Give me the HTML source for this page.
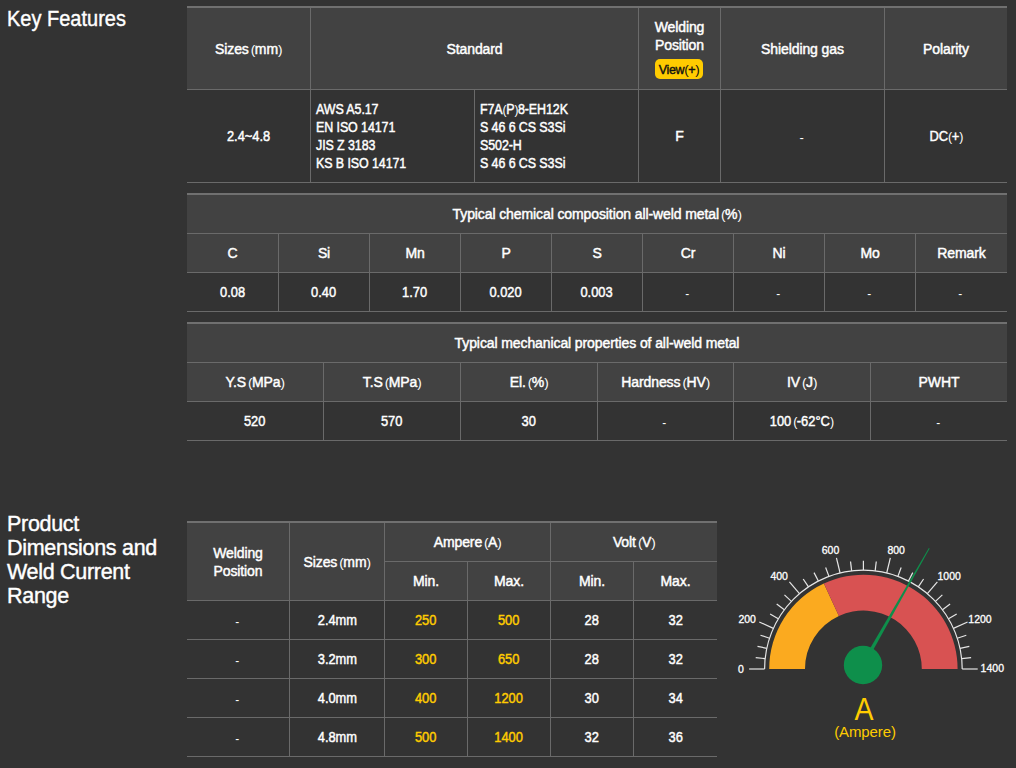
<!DOCTYPE html>
<html><head><meta charset="utf-8"><style>
html,body{margin:0;padding:0;background:#333333;width:1016px;height:768px;overflow:hidden;}
body{position:relative;font-family:"Liberation Sans",sans-serif;color:#fff;}
.r{position:absolute}
.t,.th,.td{position:absolute;display:flex;align-items:center;text-align:center;font-size:14px;line-height:18px;color:#fff;-webkit-text-stroke-width:0.45px;white-space:nowrap;letter-spacing:-0.1px}
.n{letter-spacing:0px}
.n>div{transform:scaleX(0.92)}
.code{letter-spacing:-0.1px}
.code>div{transform:scaleX(0.89);transform-origin:0 50%}
.lt{letter-spacing:-0.1px}
.ps{word-spacing:-1.2px}
.dash{-webkit-text-stroke-width:0;font-size:13px;line-height:0;position:relative;top:1px;left:-1px}
.p{-webkit-text-stroke-width:0;letter-spacing:-0.5px;font-size:13.5px;line-height:0}
.title{position:absolute;font-size:21.5px;line-height:24px;color:#fff;white-space:nowrap;letter-spacing:-0.45px;-webkit-text-stroke:0.4px #fff}
.btn{position:absolute;left:16px;top:51px;width:48px;height:20px;border-radius:5px;background:#ffcc00;color:#111;font-size:12.5px;line-height:22px;font-weight:400;text-align:center;letter-spacing:-0.3px;-webkit-text-stroke-width:0.4px}
.g{position:absolute;left:0;top:0}
.gl{font-family:"Liberation Sans",sans-serif;font-size:10.5px;fill:#fff;stroke:#fff;stroke-width:0.3px}
.bigA{position:absolute;text-align:center;font-size:31px;line-height:34px;color:#ffcc00;transform:scaleX(0.92)}
.amp{position:absolute;text-align:center;font-size:15px;line-height:18px;color:#ffcc00;letter-spacing:-0.1px}
</style></head><body>
<div class="title" style="left:7px;top:7px;letter-spacing:0px;transform:scaleX(0.93);transform-origin:0 0">Key Features</div><div class="title" style="left:7px;top:512px;width:175px;letter-spacing:-0.3px">Product<br>Dimensions and<br>Weld Current<br>Range</div><div class="r" style="left:187px;top:6px;width:820px;height:2px;background:#707070"></div><div class="r" style="left:187px;top:8px;width:820px;height:81px;background:#424242"></div><div class="r" style="left:187px;top:89px;width:820px;height:1px;background:#6a6a6a"></div><div class="r" style="left:187px;top:182px;width:820px;height:1px;background:#6a6a6a"></div><div class="r" style="left:310px;top:8px;width:1px;height:174px;background:#6a6a6a"></div><div class="r" style="left:638px;top:8px;width:1px;height:174px;background:#6a6a6a"></div><div class="r" style="left:720px;top:8px;width:1px;height:174px;background:#6a6a6a"></div><div class="r" style="left:884px;top:8px;width:1px;height:174px;background:#6a6a6a"></div><div class="r" style="left:474px;top:90px;width:1px;height:92px;background:#6a6a6a"></div><div class="th" style="left:187px;top:8px;width:123px;height:81px;justify-content:center;"><div>Sizes<span class="p ps"> (</span>mm<span class="p">)</span></div></div><div class="th" style="left:311px;top:8px;width:327px;height:81px;justify-content:center;"><div>Standard</div></div><div class="th" style="left:639px;top:8px;width:81px;height:81px;flex-direction:column;justify-content:flex-start"><div style="position:absolute;left:0;width:81px;top:10px;text-align:center">Welding<br>Position</div><div class="btn">View<span class="p">(</span>+<span class="p">)</span></div></div><div class="th" style="left:721px;top:8px;width:163px;height:81px;justify-content:center;"><div>Shielding gas</div></div><div class="th" style="left:885px;top:8px;width:122px;height:81px;justify-content:center;"><div>Polarity</div></div><div class="td n" style="left:187px;top:90px;width:123px;height:92px;justify-content:center;"><div>2.4~4.8</div></div><div class="td code" style="left:316px;top:90px;width:158px;height:92px;justify-content:flex-start;text-align:left"><div>AWS A5.17<br>EN ISO 14171<br>JIS Z 3183<br>KS B ISO 14171</div></div><div class="td code" style="left:480px;top:90px;width:158px;height:92px;justify-content:flex-start;text-align:left"><div>F7A<span class="p">(</span>P<span class="p">)</span>8-EH12K<br>S 46 6 CS S3Si<br>S502-H<br>S 46 6 CS S3Si</div></div><div class="td" style="left:639px;top:90px;width:81px;height:92px;justify-content:center;"><div>F</div></div><div class="td" style="left:721px;top:90px;width:163px;height:92px;justify-content:center;"><div><span class="dash">-</span></div></div><div class="td n" style="left:885px;top:90px;width:122px;height:92px;justify-content:center;"><div>DC<span class="p">(</span>+<span class="p">)</span></div></div><div class="r" style="left:187px;top:193px;width:820px;height:2px;background:#707070"></div><div class="r" style="left:187px;top:195px;width:820px;height:77px;background:#424242"></div><div class="r" style="left:187px;top:233px;width:820px;height:1px;background:#6a6a6a"></div><div class="r" style="left:187px;top:272px;width:820px;height:1px;background:#6a6a6a"></div><div class="r" style="left:187px;top:311px;width:820px;height:1px;background:#6a6a6a"></div><div class="th lt" style="left:187px;top:195px;width:820px;height:38px;justify-content:center;"><div>Typical chemical composition all-weld metal<span class="p ps"> (</span>%<span class="p">)</span></div></div><div class="r" style="left:278px;top:234px;width:1px;height:77px;background:#6a6a6a"></div><div class="r" style="left:369px;top:234px;width:1px;height:77px;background:#6a6a6a"></div><div class="r" style="left:460px;top:234px;width:1px;height:77px;background:#6a6a6a"></div><div class="r" style="left:551px;top:234px;width:1px;height:77px;background:#6a6a6a"></div><div class="r" style="left:642px;top:234px;width:1px;height:77px;background:#6a6a6a"></div><div class="r" style="left:733px;top:234px;width:1px;height:77px;background:#6a6a6a"></div><div class="r" style="left:824px;top:234px;width:1px;height:77px;background:#6a6a6a"></div><div class="r" style="left:915px;top:234px;width:1px;height:77px;background:#6a6a6a"></div><div class="th" style="left:187px;top:234px;width:91px;height:38px;justify-content:center;"><div>C</div></div><div class="td n" style="left:187px;top:273px;width:91px;height:38px;justify-content:center;"><div>0.08</div></div><div class="th" style="left:279px;top:234px;width:90px;height:38px;justify-content:center;"><div>Si</div></div><div class="td n" style="left:279px;top:273px;width:90px;height:38px;justify-content:center;"><div>0.40</div></div><div class="th" style="left:370px;top:234px;width:90px;height:38px;justify-content:center;"><div>Mn</div></div><div class="td n" style="left:370px;top:273px;width:90px;height:38px;justify-content:center;"><div>1.70</div></div><div class="th" style="left:461px;top:234px;width:90px;height:38px;justify-content:center;"><div>P</div></div><div class="td n" style="left:461px;top:273px;width:90px;height:38px;justify-content:center;"><div>0.020</div></div><div class="th" style="left:552px;top:234px;width:90px;height:38px;justify-content:center;"><div>S</div></div><div class="td n" style="left:552px;top:273px;width:90px;height:38px;justify-content:center;"><div>0.003</div></div><div class="th" style="left:643px;top:234px;width:90px;height:38px;justify-content:center;"><div>Cr</div></div><div class="td n" style="left:643px;top:273px;width:90px;height:38px;justify-content:center;"><div><span class="dash">-</span></div></div><div class="th" style="left:734px;top:234px;width:90px;height:38px;justify-content:center;"><div>Ni</div></div><div class="td n" style="left:734px;top:273px;width:90px;height:38px;justify-content:center;"><div><span class="dash">-</span></div></div><div class="th" style="left:825px;top:234px;width:90px;height:38px;justify-content:center;"><div>Mo</div></div><div class="td n" style="left:825px;top:273px;width:90px;height:38px;justify-content:center;"><div><span class="dash">-</span></div></div><div class="th" style="left:916px;top:234px;width:91px;height:38px;justify-content:center;"><div>Remark</div></div><div class="td n" style="left:916px;top:273px;width:91px;height:38px;justify-content:center;"><div><span class="dash">-</span></div></div><div class="r" style="left:187px;top:322px;width:820px;height:2px;background:#707070"></div><div class="r" style="left:187px;top:324px;width:820px;height:77px;background:#424242"></div><div class="r" style="left:187px;top:362px;width:820px;height:1px;background:#6a6a6a"></div><div class="r" style="left:187px;top:401px;width:820px;height:1px;background:#6a6a6a"></div><div class="r" style="left:187px;top:440px;width:820px;height:1px;background:#6a6a6a"></div><div class="th lt" style="left:187px;top:324px;width:820px;height:38px;justify-content:center;"><div>Typical mechanical properties of all-weld metal</div></div><div class="r" style="left:323px;top:363px;width:1px;height:77px;background:#6a6a6a"></div><div class="r" style="left:460px;top:363px;width:1px;height:77px;background:#6a6a6a"></div><div class="r" style="left:597px;top:363px;width:1px;height:77px;background:#6a6a6a"></div><div class="r" style="left:733px;top:363px;width:1px;height:77px;background:#6a6a6a"></div><div class="r" style="left:870px;top:363px;width:1px;height:77px;background:#6a6a6a"></div><div class="th" style="left:187px;top:363px;width:136px;height:38px;justify-content:center;"><div>Y.S<span class="p ps"> (</span>MPa<span class="p">)</span></div></div><div class="td n" style="left:187px;top:402px;width:136px;height:38px;justify-content:center;"><div>520</div></div><div class="th" style="left:324px;top:363px;width:136px;height:38px;justify-content:center;"><div>T.S<span class="p ps"> (</span>MPa<span class="p">)</span></div></div><div class="td n" style="left:324px;top:402px;width:136px;height:38px;justify-content:center;"><div>570</div></div><div class="th" style="left:461px;top:363px;width:136px;height:38px;justify-content:center;"><div>El.<span class="p ps"> (</span>%<span class="p">)</span></div></div><div class="td n" style="left:461px;top:402px;width:136px;height:38px;justify-content:center;"><div>30</div></div><div class="th" style="left:598px;top:363px;width:135px;height:38px;justify-content:center;"><div>Hardness<span class="p ps"> (</span>HV<span class="p">)</span></div></div><div class="td n" style="left:598px;top:402px;width:135px;height:38px;justify-content:center;"><div><span class="dash">-</span></div></div><div class="th" style="left:734px;top:363px;width:136px;height:38px;justify-content:center;"><div>IV<span class="p ps"> (</span>J<span class="p">)</span></div></div><div class="td n" style="left:734px;top:402px;width:136px;height:38px;justify-content:center;"><div>100<span class="p ps"> (</span>-62&deg;C<span class="p">)</span></div></div><div class="th" style="left:871px;top:363px;width:136px;height:38px;justify-content:center;"><div>PWHT</div></div><div class="td n" style="left:871px;top:402px;width:136px;height:38px;justify-content:center;"><div><span class="dash">-</span></div></div><div class="r" style="left:187px;top:521px;width:530px;height:2px;background:#707070"></div><div class="r" style="left:187px;top:523px;width:530px;height:77px;background:#424242"></div><div class="r" style="left:187px;top:600px;width:530px;height:1px;background:#6a6a6a"></div><div class="r" style="left:187px;top:639px;width:530px;height:1px;background:#6a6a6a"></div><div class="r" style="left:187px;top:678px;width:530px;height:1px;background:#6a6a6a"></div><div class="r" style="left:187px;top:717px;width:530px;height:1px;background:#6a6a6a"></div><div class="r" style="left:187px;top:756px;width:530px;height:1px;background:#6a6a6a"></div><div class="r" style="left:289px;top:523px;width:1px;height:233px;background:#6a6a6a"></div><div class="r" style="left:384px;top:523px;width:1px;height:233px;background:#6a6a6a"></div><div class="r" style="left:550px;top:523px;width:1px;height:233px;background:#6a6a6a"></div><div class="r" style="left:467px;top:562px;width:1px;height:194px;background:#6a6a6a"></div><div class="r" style="left:633px;top:562px;width:1px;height:194px;background:#6a6a6a"></div><div class="r" style="left:385px;top:561px;width:332px;height:1px;background:#6a6a6a"></div><div class="th" style="left:187px;top:523px;width:102px;height:77px;justify-content:center;"><div>Welding<br>Position</div></div><div class="th" style="left:290px;top:523px;width:94px;height:77px;justify-content:center;"><div>Sizes<span class="p ps"> (</span>mm<span class="p">)</span></div></div><div class="th" style="left:385px;top:523px;width:165px;height:38px;justify-content:center;"><div>Ampere<span class="p ps"> (</span>A<span class="p">)</span></div></div><div class="th" style="left:551px;top:523px;width:166px;height:38px;justify-content:center;"><div>Volt<span class="p ps"> (</span>V<span class="p">)</span></div></div><div class="th" style="left:385px;top:562px;width:82px;height:38px;justify-content:center;"><div>Min.</div></div><div class="th" style="left:468px;top:562px;width:82px;height:38px;justify-content:center;"><div>Max.</div></div><div class="th" style="left:551px;top:562px;width:82px;height:38px;justify-content:center;"><div>Min.</div></div><div class="th" style="left:634px;top:562px;width:83px;height:38px;justify-content:center;"><div>Max.</div></div><div class="td n" style="left:187px;top:601px;width:102px;height:38px;justify-content:center;"><div><span class="dash">-</span></div></div><div class="td n" style="left:290px;top:601px;width:94px;height:38px;justify-content:center;"><div>2.4mm</div></div><div class="td n" style="left:385px;top:601px;width:82px;height:38px;justify-content:center;color:#ffcc00"><div>250</div></div><div class="td n" style="left:468px;top:601px;width:82px;height:38px;justify-content:center;color:#ffcc00"><div>500</div></div><div class="td n" style="left:551px;top:601px;width:82px;height:38px;justify-content:center;"><div>28</div></div><div class="td n" style="left:634px;top:601px;width:83px;height:38px;justify-content:center;"><div>32</div></div><div class="td n" style="left:187px;top:640px;width:102px;height:38px;justify-content:center;"><div><span class="dash">-</span></div></div><div class="td n" style="left:290px;top:640px;width:94px;height:38px;justify-content:center;"><div>3.2mm</div></div><div class="td n" style="left:385px;top:640px;width:82px;height:38px;justify-content:center;color:#ffcc00"><div>300</div></div><div class="td n" style="left:468px;top:640px;width:82px;height:38px;justify-content:center;color:#ffcc00"><div>650</div></div><div class="td n" style="left:551px;top:640px;width:82px;height:38px;justify-content:center;"><div>28</div></div><div class="td n" style="left:634px;top:640px;width:83px;height:38px;justify-content:center;"><div>32</div></div><div class="td n" style="left:187px;top:679px;width:102px;height:38px;justify-content:center;"><div><span class="dash">-</span></div></div><div class="td n" style="left:290px;top:679px;width:94px;height:38px;justify-content:center;"><div>4.0mm</div></div><div class="td n" style="left:385px;top:679px;width:82px;height:38px;justify-content:center;color:#ffcc00"><div>400</div></div><div class="td n" style="left:468px;top:679px;width:82px;height:38px;justify-content:center;color:#ffcc00"><div>1200</div></div><div class="td n" style="left:551px;top:679px;width:82px;height:38px;justify-content:center;"><div>30</div></div><div class="td n" style="left:634px;top:679px;width:83px;height:38px;justify-content:center;"><div>34</div></div><div class="td n" style="left:187px;top:718px;width:102px;height:38px;justify-content:center;"><div><span class="dash">-</span></div></div><div class="td n" style="left:290px;top:718px;width:94px;height:38px;justify-content:center;"><div>4.8mm</div></div><div class="td n" style="left:385px;top:718px;width:82px;height:38px;justify-content:center;color:#ffcc00"><div>500</div></div><div class="td n" style="left:468px;top:718px;width:82px;height:38px;justify-content:center;color:#ffcc00"><div>1400</div></div><div class="td n" style="left:551px;top:718px;width:82px;height:38px;justify-content:center;"><div>32</div></div><div class="td n" style="left:634px;top:718px;width:83px;height:38px;justify-content:center;"><div>36</div></div><svg class="g" width="1016" height="768" viewBox="0 0 1016 768"><path d="M769.20,669.00 A94.2,94.2 0 0 1 823.89,583.49 L838.90,615.99 A58.4,58.4 0 0 0 805.00,669.00 Z" fill="#fbaa1f"/><path d="M823.89,583.49 A94.2,94.2 0 0 1 957.60,669.00 L921.80,669.00 A58.4,58.4 0 0 0 838.90,615.99 Z" fill="#d85252"/><path d="M764.60,669.00 A98.8,98.8 0 0 1 962.20,669.00" fill="none" stroke="#e6e6e6" stroke-width="1.2"/><line x1="764.60" y1="669.00" x2="749.10" y2="669.00" stroke="#e6e6e6" stroke-width="1.2"/><line x1="765.15" y1="658.62" x2="755.70" y2="657.63" stroke="#e6e6e6" stroke-width="1.2"/><line x1="766.79" y1="648.33" x2="757.50" y2="646.34" stroke="#e6e6e6" stroke-width="1.2"/><line x1="769.52" y1="638.20" x2="760.50" y2="635.24" stroke="#e6e6e6" stroke-width="1.2"/><line x1="773.36" y1="628.33" x2="759.23" y2="621.95" stroke="#e6e6e6" stroke-width="1.2"/><line x1="778.29" y1="618.82" x2="770.11" y2="614.00" stroke="#e6e6e6" stroke-width="1.2"/><line x1="784.30" y1="609.79" x2="776.70" y2="604.10" stroke="#e6e6e6" stroke-width="1.2"/><line x1="791.38" y1="601.37" x2="784.45" y2="594.86" stroke="#e6e6e6" stroke-width="1.2"/><line x1="799.46" y1="593.68" x2="789.43" y2="581.86" stroke="#e6e6e6" stroke-width="1.2"/><line x1="808.49" y1="586.86" x2="803.21" y2="578.97" stroke="#e6e6e6" stroke-width="1.2"/><line x1="818.36" y1="581.06" x2="814.03" y2="572.61" stroke="#e6e6e6" stroke-width="1.2"/><line x1="828.95" y1="576.40" x2="825.64" y2="567.50" stroke="#e6e6e6" stroke-width="1.2"/><line x1="840.10" y1="572.99" x2="836.45" y2="557.92" stroke="#e6e6e6" stroke-width="1.2"/><line x1="851.65" y1="570.90" x2="850.52" y2="561.47" stroke="#e6e6e6" stroke-width="1.2"/><line x1="863.40" y1="570.20" x2="863.40" y2="560.70" stroke="#e6e6e6" stroke-width="1.2"/><line x1="875.15" y1="570.90" x2="876.28" y2="561.47" stroke="#e6e6e6" stroke-width="1.2"/><line x1="886.70" y1="572.99" x2="890.35" y2="557.92" stroke="#e6e6e6" stroke-width="1.2"/><line x1="897.85" y1="576.40" x2="901.16" y2="567.50" stroke="#e6e6e6" stroke-width="1.2"/><line x1="908.44" y1="581.06" x2="912.77" y2="572.61" stroke="#e6e6e6" stroke-width="1.2"/><line x1="918.31" y1="586.86" x2="923.59" y2="578.97" stroke="#e6e6e6" stroke-width="1.2"/><line x1="927.34" y1="593.68" x2="937.37" y2="581.86" stroke="#e6e6e6" stroke-width="1.2"/><line x1="935.42" y1="601.37" x2="942.35" y2="594.86" stroke="#e6e6e6" stroke-width="1.2"/><line x1="942.50" y1="609.79" x2="950.10" y2="604.10" stroke="#e6e6e6" stroke-width="1.2"/><line x1="948.51" y1="618.82" x2="956.69" y2="614.00" stroke="#e6e6e6" stroke-width="1.2"/><line x1="953.44" y1="628.33" x2="967.57" y2="621.95" stroke="#e6e6e6" stroke-width="1.2"/><line x1="957.28" y1="638.20" x2="966.30" y2="635.24" stroke="#e6e6e6" stroke-width="1.2"/><line x1="960.01" y1="648.33" x2="969.30" y2="646.34" stroke="#e6e6e6" stroke-width="1.2"/><line x1="961.65" y1="658.62" x2="971.10" y2="657.63" stroke="#e6e6e6" stroke-width="1.2"/><line x1="962.20" y1="669.00" x2="977.70" y2="669.00" stroke="#e6e6e6" stroke-width="1.2"/><text x="741" y="672.9" text-anchor="middle" class="gl">0</text><text x="747.2" y="622.9" text-anchor="middle" class="gl">200</text><text x="779.2" y="580.1" text-anchor="middle" class="gl">400</text><text x="830.5" y="554.1" text-anchor="middle" class="gl">600</text><text x="896.2" y="554.1" text-anchor="middle" class="gl">800</text><text x="949.2" y="580.3" text-anchor="middle" class="gl">1000</text><text x="980" y="622.9" text-anchor="middle" class="gl">1200</text><text x="992.3" y="672.4" text-anchor="middle" class="gl">1400</text><polygon points="864.25,665.94 929.63,548.39 928.85,547.95 860.95,664.06" fill="#0e8f4b"/><circle cx="863" cy="665" r="19.2" fill="#0e8f4b"/></svg><div class="bigA" style="left:814px;top:693px;width:100px">A</div><div class="amp" style="left:815px;top:723px;width:100px">(Ampere)</div>
</body></html>
